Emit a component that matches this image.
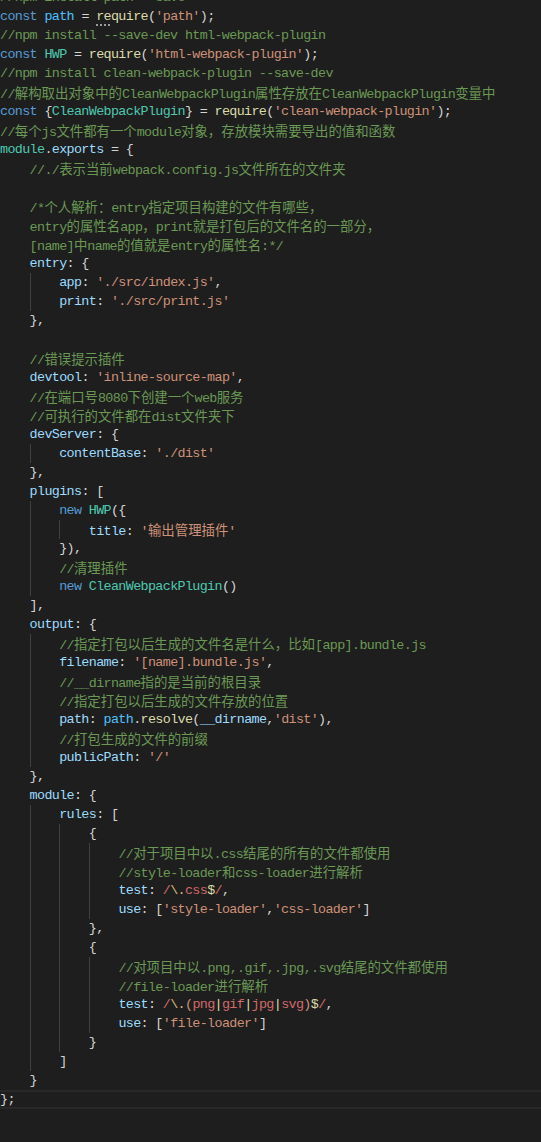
import React from 'react';

// token colours, VS Code Dark+ style
const C = {
  d: 'text-[#d4d4d4]',
  k: 'text-[#569cd6]',
  v: 'text-[#4fc1ff]',
  f: 'text-[#dcdcaa]',
  s: 'text-[#ce9178]',
  c: 'text-[#6a9955]',
  p: 'text-[#9cdcfe]',
  t: 'text-[#4ec9b0]',
  r: 'text-[#d16969]',
  e: 'text-[#d7ba7d]',
};

const lines = [
  [0, [['c', '//npm install path --save']]],
  [0, [['k', 'const'], ['d', ' '], ['v', 'path'], ['d', ' = '], ['f', 're', 'dots'], ['f', 'quire'], ['d', '('], ['s', "'path'"], ['d', ');']]],
  [0, [['c', '//npm install --save-dev html-webpack-plugin']]],
  [0, [['k', 'const'], ['d', ' '], ['t', 'HWP'], ['d', ' = '], ['f', 'require'], ['d', '('], ['s', "'html-webpack-plugin'"], ['d', ');']]],
  [0, [['c', '//npm install clean-webpack-plugin --save-dev']]],
  [0, [['c', '//解构取出对象中的CleanWebpackPlugin属性存放在CleanWebpackPlugin变量中']]],
  [0, [['k', 'const'], ['d', ' {'], ['t', 'CleanWebpackPlugin'], ['d', '} = '], ['f', 'require'], ['d', '('], ['s', "'clean-webpack-plugin'"], ['d', ');']]],
  [0, [['c', '//每个js文件都有一个module对象，存放模块需要导出的值和函数']]],
  [0, [['t', 'module'], ['d', '.'], ['p', 'exports'], ['d', ' = {']]],
  [1, [['c', '//./表示当前webpack.config.js文件所在的文件夹']]],
  [1, []],
  [1, [['c', '/*个人解析：entry指定项目构建的文件有哪些，']]],
  [1, [['c', 'entry的属性名app，print就是打包后的文件名的一部分，']]],
  [1, [['c', '[name]中name的值就是entry的属性名:*/']]],
  [1, [['p', 'entry'], ['d', ': {']]],
  [2, [['p', 'app'], ['d', ': '], ['s', "'./src/index.js'"], ['d', ',']]],
  [2, [['p', 'print'], ['d', ': '], ['s', "'./src/print.js'"]]],
  [1, [['d', '},']]],
  [1, []],
  [1, [['c', '//错误提示插件']]],
  [1, [['p', 'devtool'], ['d', ': '], ['s', "'inline-source-map'"], ['d', ',']]],
  [1, [['c', '//在端口号8080下创建一个web服务']]],
  [1, [['c', '//可执行的文件都在dist文件夹下']]],
  [1, [['p', 'devServer'], ['d', ': {']]],
  [2, [['p', 'contentBase'], ['d', ': '], ['s', "'./dist'"]]],
  [1, [['d', '},']]],
  [1, [['p', 'plugins'], ['d', ': [']]],
  [2, [['k', 'new'], ['d', ' '], ['t', 'HWP'], ['d', '({']]],
  [3, [['p', 'title'], ['d', ': '], ['s', "'输出管理插件'"]]],
  [2, [['d', '}),']]],
  [2, [['c', '//清理插件']]],
  [2, [['k', 'new'], ['d', ' '], ['t', 'CleanWebpackPlugin'], ['d', '()']]],
  [1, [['d', '],']]],
  [1, [['p', 'output'], ['d', ': {']]],
  [2, [['c', '//指定打包以后生成的文件名是什么，比如[app].bundle.js']]],
  [2, [['p', 'filename'], ['d', ': '], ['s', "'[name].bundle.js'"], ['d', ',']]],
  [2, [['c', '//__dirname指的是当前的根目录']]],
  [2, [['c', '//指定打包以后生成的文件存放的位置']]],
  [2, [['p', 'path'], ['d', ': '], ['v', 'path'], ['d', '.'], ['f', 'resolve'], ['d', '('], ['p', '__dirname'], ['d', ','], ['s', "'dist'"], ['d', '),']]],
  [2, [['c', '//打包生成的文件的前缀']]],
  [2, [['p', 'publicPath'], ['d', ': '], ['s', "'/'"]]],
  [1, [['d', '},']]],
  [1, [['p', 'module'], ['d', ': {']]],
  [2, [['p', 'rules'], ['d', ': [']]],
  [3, [['d', '{']]],
  [4, [['c', '//对于项目中以.css结尾的所有的文件都使用']]],
  [4, [['c', '//style-loader和css-loader进行解析']]],
  [4, [['p', 'test'], ['d', ': '], ['r', '/'], ['e', '\\.'], ['r', 'css'], ['f', '$'], ['r', '/'], ['d', ',']]],
  [4, [['p', 'use'], ['d', ': ['], ['s', "'style-loader'"], ['d', ','], ['s', "'css-loader'"], ['d', ']']]],
  [3, [['d', '},']]],
  [3, [['d', '{']]],
  [4, [['c', '//对项目中以.png,.gif,.jpg,.svg结尾的文件都使用']]],
  [4, [['c', '//file-loader进行解析']]],
  [4, [['p', 'test'], ['d', ': '], ['r', '/'], ['e', '\\.'], ['s', '('], ['r', 'png'], ['f', '|'], ['r', 'gif'], ['f', '|'], ['r', 'jpg'], ['f', '|'], ['r', 'svg'], ['s', ')'], ['f', '$'], ['r', '/'], ['d', ',']]],
  [4, [['p', 'use'], ['d', ': ['], ['s', "'file-loader'"], ['d', ']']]],
  [3, [['d', '}']]],
  [2, [['d', ']']]],
  [1, [['d', '}']]],
  [0, [['d', '};']]],
];

const CJK = /([\u3000-\u303f\u4e00-\u9fff\uff00-\uffef]+)/;

function Text({ text }) {
  // CJK runs keep full-width advance, latin runs are narrowed to Consolas width
  return text.split(CJK).map((part, i) =>
    CJK.test(part) ? (
      <span key={i} className="font-['Noto_Sans_CJK_SC',sans-serif] tracking-normal">{part}</span>
    ) : (
      part
    )
  );
}

function Line({ indent, tokens, active }) {
  return (
    <div
      className={`h-[19px] leading-[19px] whitespace-pre overflow-hidden ${
        active ? 'shadow-[inset_0_2px_0_#282828,inset_0_-2px_0_#282828]' : ''
      }`}
    >
      {Array.from({ length: indent }).map((_, i) => (
        <span
          key={i}
          className={`inline-block align-top w-[29.6px] h-[19px] ${i > 0 ? 'border-l border-[#404040]' : ''}`}
        />
      ))}
      {tokens.map(([c, text, mark], i) => (
        <span
          key={i}
          className={`${C[c]} ${
            mark === 'dots' ? 'underline decoration-dotted decoration-[#9a9a9a] decoration-2 underline-offset-[4px]' : ''
          }`}
        >
          <Text text={text} />
        </span>
      ))}
    </div>
  );
}

export default function App() {
  return (
    <div className="w-[541px] h-[1142px] overflow-hidden bg-[#1e1e1e] font-['Liberation_Mono','Noto_Sans_CJK_SC',monospace] text-[13.4px] tracking-[-0.64px]">
      <div className="-mt-[12px]">
        {lines.map(([indent, tokens], i) => (
          <Line key={i} indent={indent} tokens={tokens} active={i === lines.length - 1} />
        ))}
      </div>
    </div>
  );
}
